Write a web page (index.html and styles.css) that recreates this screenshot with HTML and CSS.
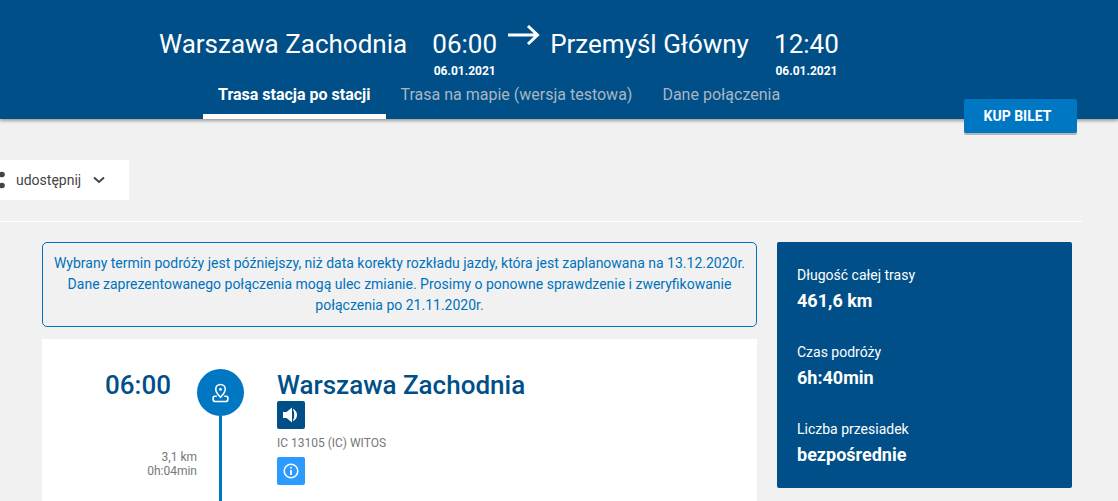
FILE: index.html
```html
<!DOCTYPE html>
<html lang="pl">
<head>
    <meta charset="UTF-8">
    <meta name="viewport" content="width=device-width, initial-scale=1.0">
    <title>Trasa stacja po stacji</title>
    <link rel="stylesheet" href="styles.css">
</head>
<body>
    <header class="top">
        <div class="route">
            <div class="route-station">Warszawa Zachodnia</div>
            <div class="route-time">
                <div class="route-hour">06:00</div>
                <div class="route-date">06.01.2021</div>
            </div>
            <svg class="route-arrow" width="32" height="20" viewBox="0 0 32 20">
                <path d="M0 10H30M20 1L29.500 10L20 19" fill="none" stroke="#fff" stroke-width="3"/>
            </svg>
            <div class="route-station">Przemyśl Główny</div>
            <div class="route-time">
                <div class="route-hour">12:40</div>
                <div class="route-date">06.01.2021</div>
            </div>
        </div>
        <nav class="tabs">
            <a class="tab tab-active">Trasa stacja po stacji</a>
            <a class="tab">Trasa na mapie (wersja testowa)</a>
            <a class="tab">Dane połączenia</a>
        </nav>
        <button class="buy">KUP BILET</button>
    </header>

    <div class="share-row">
        <div class="share">
            <svg class="share-icon" width="14" height="20" viewBox="0 0 14 20">
                <circle cx="10" cy="4.500" r="2.800" fill="#444"/>
                <circle cx="10" cy="15.500" r="2.800" fill="#444"/>
                <circle cx="1" cy="10" r="2.800" fill="#444"/>
            </svg>
            <span>udostępnij</span>
            <svg class="share-chevron" width="12" height="8" viewBox="0 0 12 8">
                <path d="M1 1.500L6 6L11 1.500" fill="none" stroke="#444" stroke-width="2"/>
            </svg>
        </div>
    </div>

    <main class="content">
        <section class="left">
            <div class="notice">
                Wybrany termin podróży jest późniejszy, niż data korekty rozkładu jazdy, która jest zaplanowana na 13.12.2020r. Dane zaprezentowanego połączenia mogą ulec zmianie. Prosimy o ponowne sprawdzenie i zweryfikowanie połączenia po 21.11.2020r.
            </div>
            <div class="stop">
                <div class="stop-side">
                    <div class="stop-time">06:00</div>
                    <div class="stop-dist">3,1 km<br>0h:04min</div>
                </div>
                <div class="stop-line">
                    <div class="stop-pin">
                        <svg width="17" height="20" viewBox="0 0 16 18">
                            <path d="M8 1C5.300 1 3.500 3 3.500 5.500C3.500 8.300 6.300 11.300 8 13C9.700 11.300 12.500 8.300 12.500 5.500C12.500 3 10.700 1 8 1Z" fill="none" stroke="#fff" stroke-width="1.500"/>
                            <circle cx="8" cy="5.600" r="1.300" fill="#fff"/>
                            <path d="M4.500 12H2.500C1.400 12 1 12.800 1 14.300C1 16 1.600 17 3 17H13C14.400 17 15 16 15 14.300C15 12.800 14.600 12 13.500 12H11.500" fill="none" stroke="#fff" stroke-width="1.500"/>
                        </svg>
                    </div>
                </div>
                <div class="stop-info">
                    <h2 class="stop-name">Warszawa Zachodnia</h2>
                    <div class="square square-dark">
                        <svg width="16" height="16" viewBox="0 0 16 16">
                            <path d="M0 5H3.500L9 0.500V15.500L3.500 11H0Z" fill="#fff"/>
                            <path d="M10.500 2.500C14.500 4.500 14.500 11.500 10.500 13.500C12.200 10.500 12.200 5.500 10.500 2.500Z" fill="#fff" stroke="#fff"/>
                        </svg>
                    </div>
                    <div class="stop-train">IC 13105 (IC) WITOS</div>
                    <div class="square square-light">
                        <svg width="16" height="16" viewBox="0 0 16 16">
                            <circle cx="8" cy="8" r="6.800" fill="none" stroke="#fff" stroke-width="1.500"/>
                            <path d="M8 7V12M8 4V5.600" fill="none" stroke="#fff" stroke-width="1.700"/>
                        </svg>
                    </div>
                </div>
            </div>
        </section>
        <aside class="summary">
            <div class="summary-item">
                <div class="summary-label">Długość całej trasy</div>
                <div class="summary-value">461,6 km</div>
            </div>
            <div class="summary-item">
                <div class="summary-label">Czas podróży</div>
                <div class="summary-value">6h:40min</div>
            </div>
            <div class="summary-item">
                <div class="summary-label">Liczba przesiadek</div>
                <div class="summary-value">bezpośrednie</div>
            </div>
        </aside>
    </main>
</body>
</html>
```

FILE: styles.css
```css
* {
    margin: 0;
    padding: 0;
    box-sizing: border-box;
}

html, body {
    height: 100%;
    overflow: hidden;
}

body {
    font-family: 'Roboto', sans-serif;
    background-color: #f1f1f1;
    color: #444;
}

.top {
    position: relative;
    height: 119px;
    padding: 27px 0 0 159px;
    background-color: #004f88;
    box-shadow: 0 2px 3px rgba(0, 0, 0, 0.35);
    color: #fff;
}

.route {
    display: flex;
    align-items: flex-start;
    height: 51px;
}

.route-station {
    font-size: 26px;
    line-height: 34px;
}

.route-time {
    margin-left: 25px;
    width: 65px;
    text-align: center;
}

.route-hour {
    font-size: 26px;
    line-height: 34px;
}

.route-date {
    font-size: 12px;
    font-weight: 700;
    line-height: 14px;
    margin-top: 3px;
}

.route-arrow {
    margin: -2px 10px 0 11px;
}

.tabs {
    display: flex;
    margin-left: 44px;
}

.tab {
    height: 41px;
    padding: 7px 15px 0;
    font-size: 16px;
    line-height: 19px;
    color: #a9b6c2;
}

.tab-active {
    margin-right: -1px;
    padding-right: 16px;
    color: #fff;
    font-weight: 700;
    border-bottom: 5px solid #fff;
}

.buy {
    position: absolute;
    left: 964px;
    top: 99px;
    width: 113px;
    height: 34px;
    padding-right: 6px;
    background-color: #0077c2;
    color: #fff;
    border: none;
    border-radius: 2px;
    box-shadow: 0 2px 0 #b5b5b5;
    font-family: inherit;
    font-size: 14px;
    font-weight: 700;
}

.share-row {
    height: 103px;
    padding-top: 41px;
    margin-right: 36px;
    border-bottom: 1px solid #fff;
}

.share {
    display: flex;
    align-items: center;
    width: 129px;
    height: 40px;
    background-color: #fff;
    font-size: 14px;
}

.share-icon {
    margin-left: -8px;
    margin-right: 10px;
}

.share-chevron {
    margin-left: 12px;
}

.content {
    display: flex;
    align-items: flex-start;
    gap: 20px;
    padding: 20px 0 0 42px;
}

.left {
    width: 715px;
}

.notice {
    height: 85px;
    padding: 10px 8px;
    border: 1px solid #0072bc;
    border-radius: 5px;
    color: #0072bc;
    font-size: 14px;
    line-height: 21px;
    text-align: center;
}

.stop {
    display: flex;
    height: 162px;
    margin-top: 12px;
    background-color: #fff;
}

.stop-side {
    width: 155px;
    padding-top: 30px;
    text-align: right;
}

.stop-time {
    width: 129px;
    color: #004f88;
    font-size: 26px;
    font-weight: 500;
    line-height: 32px;
}

.stop-dist {
    margin-top: 49px;
    color: #777;
    font-size: 12px;
    line-height: 14px;
}

.stop-line {
    width: 47px;
    margin-top: 30px;
    display: flex;
    flex-direction: column;
    align-items: center;
}

.stop-line::after {
    content: "";
    width: 3px;
    flex: 1;
    background-color: #0077c2;
}

.stop-pin {
    display: flex;
    align-items: center;
    justify-content: center;
    width: 47px;
    height: 47px;
    border-radius: 50%;
    background-color: #0077c2;
}

.stop-info {
    padding: 30px 0 0 33px;
}

.stop-name {
    color: #004f88;
    font-size: 26px;
    font-weight: 500;
    line-height: 32px;
}

.square {
    display: flex;
    align-items: center;
    justify-content: center;
    width: 28px;
    height: 28px;
    border-radius: 2px;
}

.square-dark {
    background-color: #004f88;
}

.square-light {
    background-color: #2b9bff;
}

.stop-train {
    margin: 7px 0 7px;
    color: #777;
    font-size: 12px;
    line-height: 14px;
}

.summary {
    width: 295px;
    height: 246px;
    padding: 23px 20px 0;
    background-color: #004f88;
    border-radius: 2px;
    color: #fff;
}

.summary-item {
    height: 77px;
}

.summary-label {
    font-size: 14px;
    line-height: 20px;
}

.summary-value {
    margin-top: 5px;
    font-size: 18px;
    font-weight: 700;
    line-height: 22px;
}
```
